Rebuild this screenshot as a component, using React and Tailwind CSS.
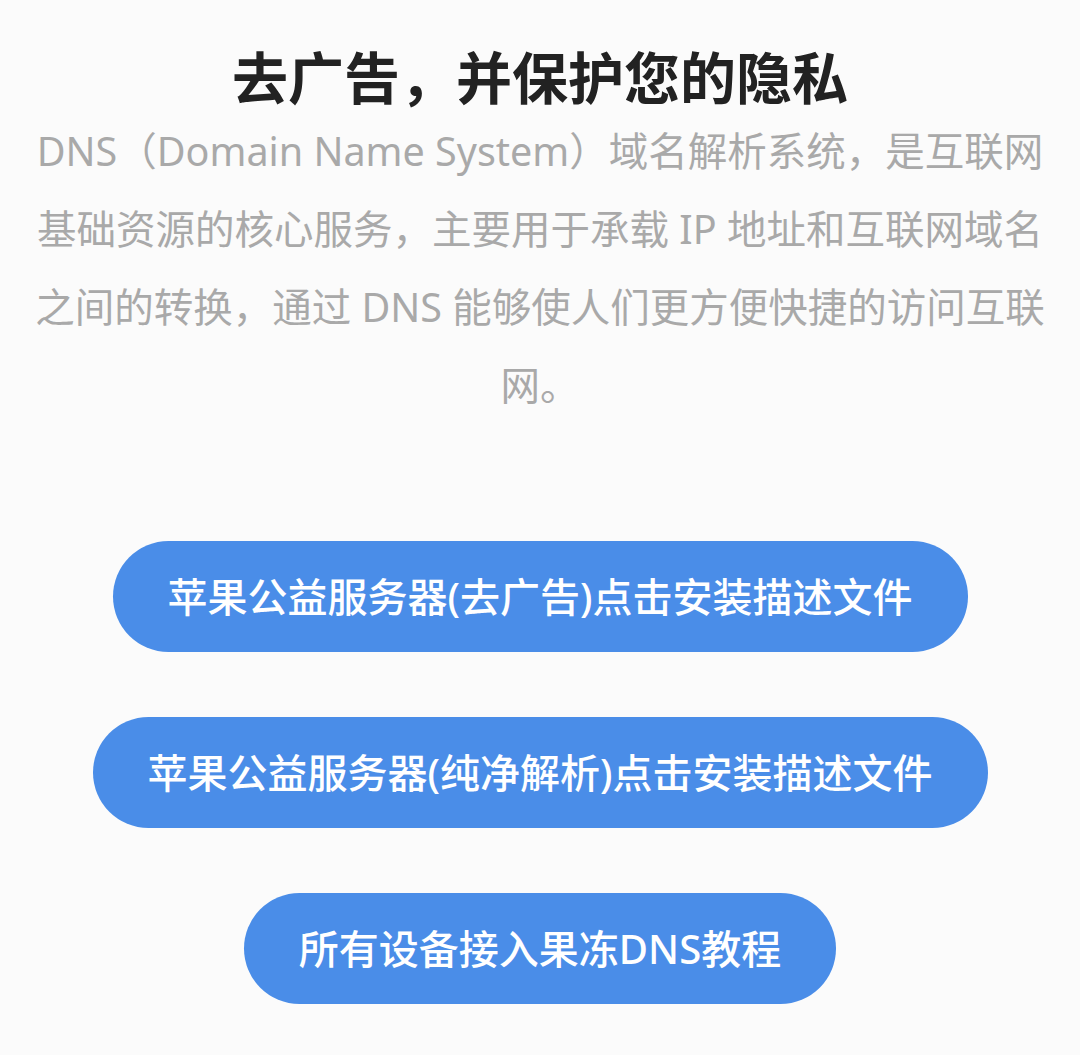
import React from 'react';

const buttons = [
  { label: '苹果公益服务器(去广告)点击安装描述文件', width: 'w-[855px]' },
  { label: '苹果公益服务器(纯净解析)点击安装描述文件', width: 'w-[895px]' },
  { label: '所有设备接入果冻DNS教程', width: 'w-[592px]' },
];

const App = () => {
  return (
    <div
      className="min-h-[1055px] bg-[#fbfbfb] flex flex-col items-center pt-[42px]"
      style={{ fontFamily: '"Noto Sans", "Noto Sans CJK SC", sans-serif' }}
    >
      <h1 className="text-[56px] leading-[70px] font-bold text-[#222222]">
        去广告，并保护您的隐私
      </h1>
      <p className="text-[39.5px] leading-[78px] text-[#a9a9a9] text-center">
        DNS（Domain Name System）域名解析系统，是互联网
        <br />
        基础资源的核心服务，主要用于承载 IP 地址和互联网域名
        <br />
        之间的转换，通过 DNS 能够使人们更方便快捷的访问互联
        <br />
        网。
      </p>
      <div className="flex flex-col items-center gap-[65px] mt-[117px]">
        {buttons.map((b) => (
          <button
            key={b.label}
            className={`${b.width} h-[111px] rounded-full bg-[#4a8de8] text-white text-[40px] font-medium flex items-center justify-center`}
          >
            {b.label}
          </button>
        ))}
      </div>
    </div>
  );
};

export default App;
